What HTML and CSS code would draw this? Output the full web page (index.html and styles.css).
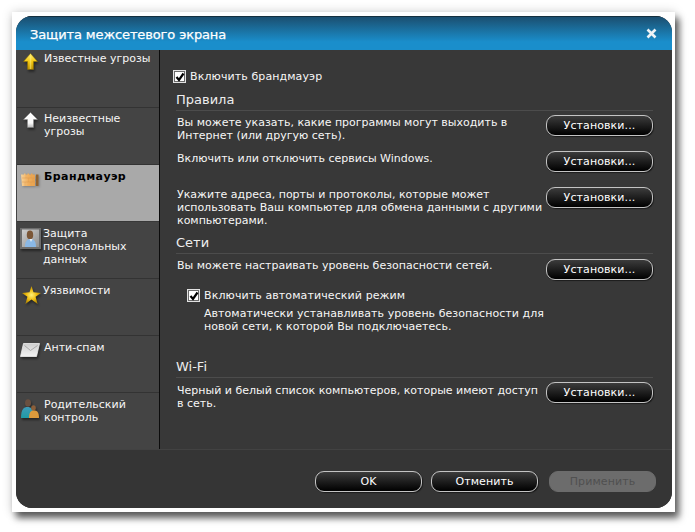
FILE: index.html
```html
<!DOCTYPE html>
<html lang="ru">
<head>
<meta charset="utf-8">
<title>Защита межсетевого экрана</title>
<link rel="stylesheet" href="styles.css">
</head>
<body>
<div class="frame">
  <div class="window">
    <header class="titlebar">
      <span class="title">Защита межсетевого экрана</span>
      <svg class="close" width="11" height="11" viewBox="0 0 11 11"><path d="M1.5 1.5l8 8M9.5 1.5l-8 8" stroke="#eef3f6" stroke-width="2.6" fill="none"/></svg>
    </header>
    <div class="body">
      <nav class="sidebar">
        <div class="nav-item item-1">
          <span class="slot"><svg class="icon i-yellow" width="15" height="17" viewBox="0 0 15 17"><defs><linearGradient id="gy" x1="0" y1="0" x2="0" y2="1"><stop offset="0" stop-color="#fff07a"/><stop offset=".5" stop-color="#f3c60f"/><stop offset="1" stop-color="#b98e00"/></linearGradient></defs><path d="M7.5 .5L14.5 8.5H10.5V16.5H4.5V8.5H.5Z" fill="url(#gy)" stroke="#8f7000" stroke-width=".5"/><path d="M7.5 3V16" stroke="#fff27e" stroke-width="1.6" opacity=".55"/></svg></span>
          <span class="nav-text">Известные угрозы</span>
        </div>
        <div class="nav-item item-2">
          <span class="slot"><svg class="icon i-white" width="15" height="16" viewBox="0 0 15 16"><defs><linearGradient id="gw" x1="0" y1="0" x2="0" y2="1"><stop offset="0" stop-color="#fff"/><stop offset=".7" stop-color="#fafafa"/><stop offset="1" stop-color="#b8b8b8"/></linearGradient></defs><path d="M7.5 .5L14.5 7.5H10.5V15.5H4.5V7.5H.5Z" fill="url(#gw)" stroke="#8d8d8d" stroke-width=".4"/></svg></span>
          <span class="nav-text">Неизвестные<br>угрозы</span>
        </div>
        <div class="nav-item item-n active">
          <span class="slot"><svg class="icon i-wall" width="19" height="14" viewBox="0 0 19 14"><defs><linearGradient id="gb" x1="0" y1="0" x2="1" y2="0"><stop offset="0" stop-color="#f6d29a"/><stop offset=".5" stop-color="#f0ae5c"/><stop offset="1" stop-color="#e8a24e"/></linearGradient></defs><path d="M0 1.500h3v-1h1.500v1h2v-1h1.500v1h2v-1h1.500v1h2.500V13H1Z" fill="url(#gb)"/><path d="M15 1.500h2.500V13H15Z" fill="#8f6230"/><path d="M1 5h14M1 9h14" stroke="#d8954c" stroke-width=".7" opacity=".7"/><path d="M5 1.500V5M10 1.500V5M7.500 5V9M12 5V9M4 9v4M10 9v4" stroke="#d8954c" stroke-width=".5" opacity=".6"/></svg></span>
          <span class="nav-text">Брандмауэр</span>
        </div>
        <div class="nav-item item-n">
          <span class="slot"><svg class="icon i-person" width="21" height="21" viewBox="0 0 21 21"><defs><linearGradient id="gp" x1="0" y1="0" x2="1" y2="1"><stop offset="0" stop-color="#cfcfcf"/><stop offset="1" stop-color="#909090"/></linearGradient></defs><rect width="21" height="21" fill="#6d6d6d"/><rect x="2" y="1.500" width="17" height="17.500" fill="url(#gp)"/><ellipse cx="10" cy="7" rx="3.200" ry="4.400" fill="#7b5637"/><path d="M5 19c0-7 3-8 5.500-8s5.500 1 5.500 8Z" fill="#8ab8e6"/><path d="M9.500 11l1.500 3 1.500-3Z" fill="#e6eef6"/></svg></span>
          <span class="nav-text shift">Защита<br>персональных<br>данных</span>
        </div>
        <div class="nav-item item-n">
          <span class="slot"><svg class="icon i-star" width="19" height="18" viewBox="0 0 19 18"><defs><radialGradient id="gs"><stop offset="0" stop-color="#fff17a"/><stop offset=".55" stop-color="#edbb10"/><stop offset="1" stop-color="#b08606"/></radialGradient></defs><path d="M9.500 0l2 6.300 7.500.7-5.400 3.700 2 7.300-6.100-4.400-6.100 4.400 2-7.300L0 7l7.500-.7Z" fill="url(#gs)"/></svg></span>
          <span class="nav-text shift">Уязвимости</span>
        </div>
        <div class="nav-item item-n">
          <span class="slot"><svg class="icon i-mail" width="20" height="14" viewBox="0 0 20 14"><defs><linearGradient id="gm" x1="0" y1="0" x2="0" y2="1"><stop offset="0" stop-color="#cfcfcf"/><stop offset="1" stop-color="#f2f2f2"/></linearGradient></defs><path d="M3.500 .5H19.500L16.500 13.500H.5Z" fill="url(#gm)" stroke="#efefef" stroke-width=".8"/><path d="M4.500 2.500l6 5 7-5" stroke="#a3a3a3" stroke-width=".9" fill="none"/></svg></span>
          <span class="nav-text">Анти-спам</span>
        </div>
        <div class="nav-item item-n">
          <span class="slot"><svg class="icon i-family" width="18" height="19" viewBox="0 0 18 19"><defs><linearGradient id="gt" x1="0" y1="0" x2="0" y2="1"><stop offset="0" stop-color="#3f9bb8"/><stop offset="1" stop-color="#1f9aa5"/></linearGradient></defs><ellipse cx="7" cy="4" rx="3" ry="3.800" fill="#6a5040"/><path d="M0 19c0-9 3-11 6.500-11s6.500 2 6.500 11Z" fill="url(#gt)"/><ellipse cx="12.500" cy="9" rx="2.300" ry="2.800" fill="#8b5f3a"/><path d="M8 19c0-6 2-7.500 5-7.500s5 1.500 5 7.500Z" fill="#dc9a3c"/></svg></span>
          <span class="nav-text">Родительский<br>контроль</span>
        </div>
      </nav>
      <main class="content">
        <label class="check top-check"><span class="box"><svg width="10" height="10" viewBox="0 0 10 10"><path d="M1.500 5l2.500 3L8.500 1.500" stroke="#000" stroke-width="2.200" fill="none"/></svg></span>Включить брандмауэр</label>

        <h2 class="section-title">Правила</h2>
        <div class="row row-a">
          <p>Вы можете указать, какие программы могут выходить в Интернет (или другую сеть).</p>
          <button class="btn">Установки...</button>
        </div>
        <div class="row row-b">
          <p>Включить или отключить сервисы Windows.</p>
          <button class="btn">Установки...</button>
        </div>
        <div class="row row-c">
          <p>Укажите адреса, порты и протоколы, которые может использовать Ваш компьютер для обмена данными с другими компьютерами.</p>
          <button class="btn">Установки...</button>
        </div>

        <h2 class="section-title nets">Сети</h2>
        <div class="row row-d">
          <p>Вы можете настраивать уровень безопасности сетей.</p>
          <button class="btn">Установки...</button>
        </div>
        <label class="check auto-check"><span class="box"><svg width="10" height="10" viewBox="0 0 10 10"><path d="M1.500 5l2.500 3L8.500 1.500" stroke="#000" stroke-width="2.200" fill="none"/></svg></span>Включить автоматический режим</label>
        <p class="auto-text">Автоматически устанавливать уровень безопасности для новой сети, к которой Вы подключаетесь.</p>

        <h2 class="section-title wifi">Wi-Fi</h2>
        <div class="row row-e">
          <p>Черный и белый список компьютеров, которые имеют доступ в сеть.</p>
          <button class="btn">Установки...</button>
        </div>
      </main>
    </div>
    <footer class="footer">
      <button class="btn">OK</button>
      <button class="btn">Отменить</button>
      <button class="btn disabled" disabled>Применить</button>
    </footer>
  </div>
</div>
</body>
</html>
```
FILE: styles.css
```css
* { box-sizing: border-box; }
html, body { margin: 0; padding: 0; background: #fff; }
body {
  width: 695px; height: 532px; overflow: hidden;
  padding: 12px 20px 20px 12px;
  font-family: "DejaVu Sans", Verdana, sans-serif;
  font-size: 11px; line-height: 13px; color: #f6f6f6;
}
.frame {
  width: 663px; height: 500px;
  padding: 4px 3px 4px 4px;
  background: #fff;
  box-shadow: 4px 6px 7px rgba(0,0,0,.62), 0 0 10px rgba(0,0,0,.18);
}
.window {
  width: 656px; height: 492px;
  display: flex; flex-direction: column;
  background: #353535;
  border-radius: 16px;
  overflow: hidden;
}
.titlebar {
  height: 34px; flex: none;
  display: flex; align-items: center; justify-content: space-between;
  padding: 3px 15px 1px 14px;
  background: linear-gradient(#1b4f70, #1a8ecb 75%);
  border-top: 1px solid #14303f;
}
.title { font-size: 13px; color: #fff; letter-spacing: -.12px; -webkit-text-stroke: .25px #fff; }
.close { display: block; margin-top: -2px; }
.body { display: flex; height: 399px; flex: none; }
.sidebar {
  width: 144px; flex: none;
  display: flex; flex-direction: column;
  background: #444;
  border-right: 1px solid #0c0c0c;
  padding-left: 1px;
}
.nav-item {
  height: 57px; flex: none;
  display: flex; align-items: flex-start;
  border-bottom: 1px solid #333;
}
.nav-item:last-child { border-bottom: 0; height: 56px; }
.item-1 { height: 58px; }
.slot { width: 27px; flex: none; }
.icon { display: block; filter: drop-shadow(1px 2px 1px rgba(0,0,0,.45)); }
.i-yellow { margin: 3px 0 0 6px; }
.i-white { margin: 4px 0 0 6px; }
.i-wall { margin: 8px 0 0 4px; filter: drop-shadow(1px 1px 1px rgba(0,0,0,.25)); }
.i-person { margin: 6px 0 0 3px; }
.i-star { margin: 7px 0 0 5px; }
.i-mail { margin: 7px 0 0 3px; }
.i-family { margin: 6px 0 0 4px; }
.item-1 .nav-text { margin-top: 2px; }
.item-2 .nav-text { margin-top: 4px; }
.item-n .nav-text { margin-top: 5px; }
.nav-text.shift { margin-left: -1px; }
.active { background: #a9a9a9; color: #000; font-weight: 700; letter-spacing: .4px; border-bottom-color: #383838; }
.content {
  flex: 1; padding: 20px 19px 0 13px;
  background: #383838;
}
.check { display: flex; align-items: center; gap: 4px; height: 13px; letter-spacing: .1px; }
.box {
  width: 13px; height: 13px; background: #fff;
  border: 1px solid #e2e2e2;
  box-shadow: inset 0 0 0 1px #6a6a6a;
  display: flex; align-items: center; justify-content: center;
}
.box svg { display: block; }
.section-title {
  margin: 9px 0 0 3px; height: 19px;
  font-size: 13px; font-weight: 400; line-height: 16px;
  border-bottom: 1px solid #4c4c4c;
  color: #eee;
}
.nets { margin-top: 0; }
.wifi { margin-top: 26px; }
.row {
  display: flex; justify-content: space-between; align-items: flex-start;
  margin-left: 4px;
}
.row p { margin: 0; width: 366px; padding-top: 1px; }
.row-a { padding-top: 4px; height: 40px; }
.row-b { height: 36px; }
.row-c { height: 48px; }
.row-d { padding-top: 5px; height: 35px; }
.row-d p { padding-top: 0; }
.row-e { padding-top: 4px; }
.row-e p { padding-top: 2px; }
.auto-check { margin: 0 0 0 14px; }
.auto-text { margin: 5px 0 0 31px; width: 345px; letter-spacing: .05px; }
.btn {
  width: 107px; height: 21px; padding: 0; flex: none;
  border: 1px solid #c4c4c4; border-radius: 9px;
  background: linear-gradient(#3c3c3c, #000);
  color: #fff;
  font: 11px/13px "DejaVu Sans", Verdana, sans-serif;
  letter-spacing: .1px;
  box-shadow: 1px 1px 1px rgba(0,0,0,.5);
}
.footer {
  flex: 1; display: flex; justify-content: flex-end; align-items: flex-start; gap: 9px;
  padding: 21px 16px 0 0;
  background: #353535;
  border-top: 1px solid #424242;
}
.footer .disabled {
  border-color: #6c6c6c; background: #6c6c6c; color: #505050; margin-left: 2px; box-shadow: none;
}
```
